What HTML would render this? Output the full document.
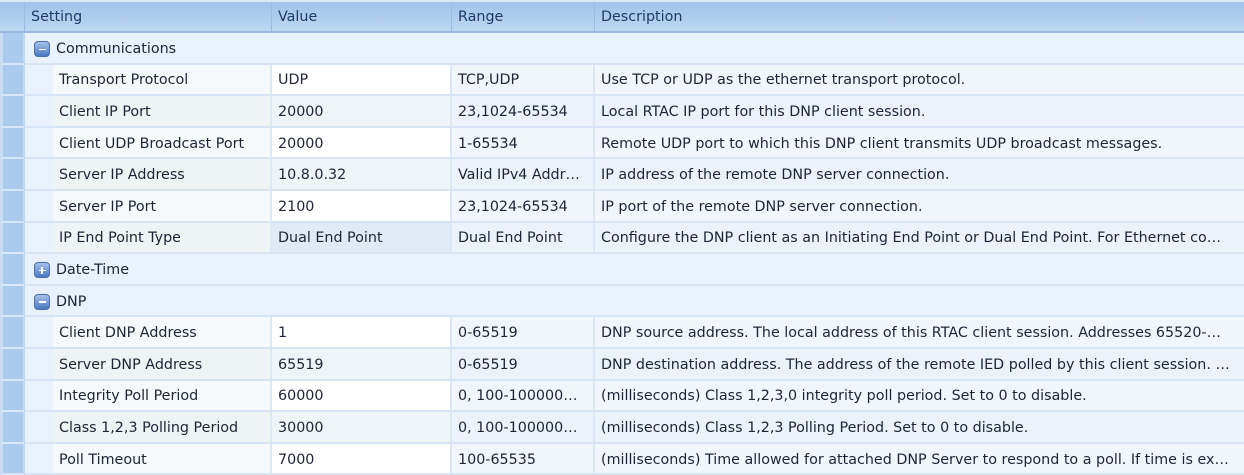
<!DOCTYPE html>
<html><head><meta charset="utf-8"><style>
*{margin:0;padding:0;box-sizing:border-box}
body{width:1244px;height:475px;overflow:hidden;background:#e8f1fc;font-family:"DejaVu Sans","Liberation Sans",sans-serif;font-size:14.3px;color:#1e2436;position:relative}
.hdr{position:absolute;left:0;top:0;width:1244px;height:33px;background:linear-gradient(#a0c2ea,#bed7f3);border-top:2px solid #dce9f8;border-bottom:2px solid #9ab9e2}
.hc{position:absolute;top:0;height:31px;line-height:31px;padding-left:6px;color:#1f3a63;border-right:1px solid #9dbce4}
.ind{position:absolute;left:0;width:25px;background:#acc9ee;border-left:3px solid #c9dcf4;border-right:2px solid #c3d8f3;border-bottom:2px solid #d7e6f8}
.row{position:absolute;left:25px;width:1219px;border-bottom:2px solid #d6e4f6}
.c{position:absolute;top:0;height:100%;padding-left:6px;padding-top:2px;display:flex;align-items:center;white-space:nowrap;overflow:hidden;border-right:2px solid #dbe7f5}
.g{background:#e8f1fc}
.g span{position:absolute;left:31px;top:1px;height:100%;display:flex;align-items:center}
.ic{position:absolute;left:9px;width:16px;height:16px;border-radius:4px;background:linear-gradient(#a7c3ea,#4a78c0);border:1px solid #4a6fae}
.ic:before{content:"";position:absolute;left:3.5px;top:6.5px;width:7px;height:1.8px;background:#fff}
.ic.p:after{content:"";position:absolute;left:6.1px;top:3.9px;width:1.8px;height:7px;background:#fff}
</style></head><body>
<div class="hdr">
<div class="hc" style="left:0;width:25px;padding:0"></div>
<div class="hc" style="left:25px;width:247px">Setting</div>
<div class="hc" style="left:272px;width:180px">Value</div>
<div class="hc" style="left:452px;width:143px">Range</div>
<div class="hc" style="left:595px;width:649px;border:none">Description</div>
</div>
<div id="rows"></div>
<script>
var data=[
["g","Communications",0],
["Transport Protocol","UDP","TCP,UDP","Use TCP or UDP as the ethernet transport protocol."],
["Client IP Port","20000","23,1024-65534","Local RTAC IP port for this DNP client session."],
["Client UDP Broadcast Port","20000","1-65534","Remote UDP port to which this DNP client transmits UDP broadcast messages."],
["Server IP Address","10.8.0.32","Valid IPv4 Addr…","IP address of the remote DNP server connection."],
["Server IP Port","2100","23,1024-65534","IP port of the remote DNP server connection."],
["IP End Point Type","Dual End Point","Dual End Point","Configure the DNP client as an Initiating End Point or Dual End Point. For Ethernet co…"],
["g","Date-Time",1],
["g","DNP",0],
["Client DNP Address","1","0-65519","DNP source address. The local address of this RTAC client session. Addresses 65520-…"],
["Server DNP Address","65519","0-65519","DNP destination address. The address of the remote IED polled by this client session. …"],
["Integrity Poll Period","60000","0, 100-100000…","(milliseconds) Class 1,2,3,0 integrity poll period. Set to 0 to disable."],
["Class 1,2,3 Polling Period","30000","0, 100-100000…","(milliseconds) Class 1,2,3 Polling Period. Set to 0 to disable."],
["Poll Timeout","7000","100-65535","(milliseconds) Time allowed for attached DNP Server to respond to a poll. If time is ex…"]];
var h="",k=0;
data.forEach(function(r,i){
 var t=33+i*31.6,ht=31.6;
 h+='<div class="ind" style="top:'+t+'px;height:'+ht+'px"></div>';
 if(r[0]=="g"){k=0;
  h+='<div class="row g" style="top:'+t+'px;height:'+ht+'px"><div class="ic'+(r[2]?' p':'')+'" style="top:8px"></div><span>'+r[1]+'</span></div>';
 }else{
  var sh=k%2==1;k++;
  var sbg=sh?'#eef3f4':'#f6f9fc',vbg=sh?'#eef4f8':'#ffffff',dbg=sh?'#ebf2f9':'#f1f6fc';
  if(r[0]=="IP End Point Type")vbg='#dfeaf6';
  h+='<div class="row" style="top:'+t+'px;height:'+ht+'px;background:#e8f1fc">'+
  '<div class="c" style="left:28px;width:219px;background:'+sbg+'">'+r[0]+'</div>'+
  '<div class="c" style="left:247px;width:180px;background:'+vbg+'">'+r[1]+'</div>'+
  '<div class="c" style="left:427px;width:143px;background:'+dbg+'">'+r[2]+'</div>'+
  '<div class="c" style="left:570px;width:649px;background:'+dbg+';border:none">'+r[3]+'</div></div>';
 }
});
document.getElementById("rows").innerHTML=h;
</script>
</body></html>
